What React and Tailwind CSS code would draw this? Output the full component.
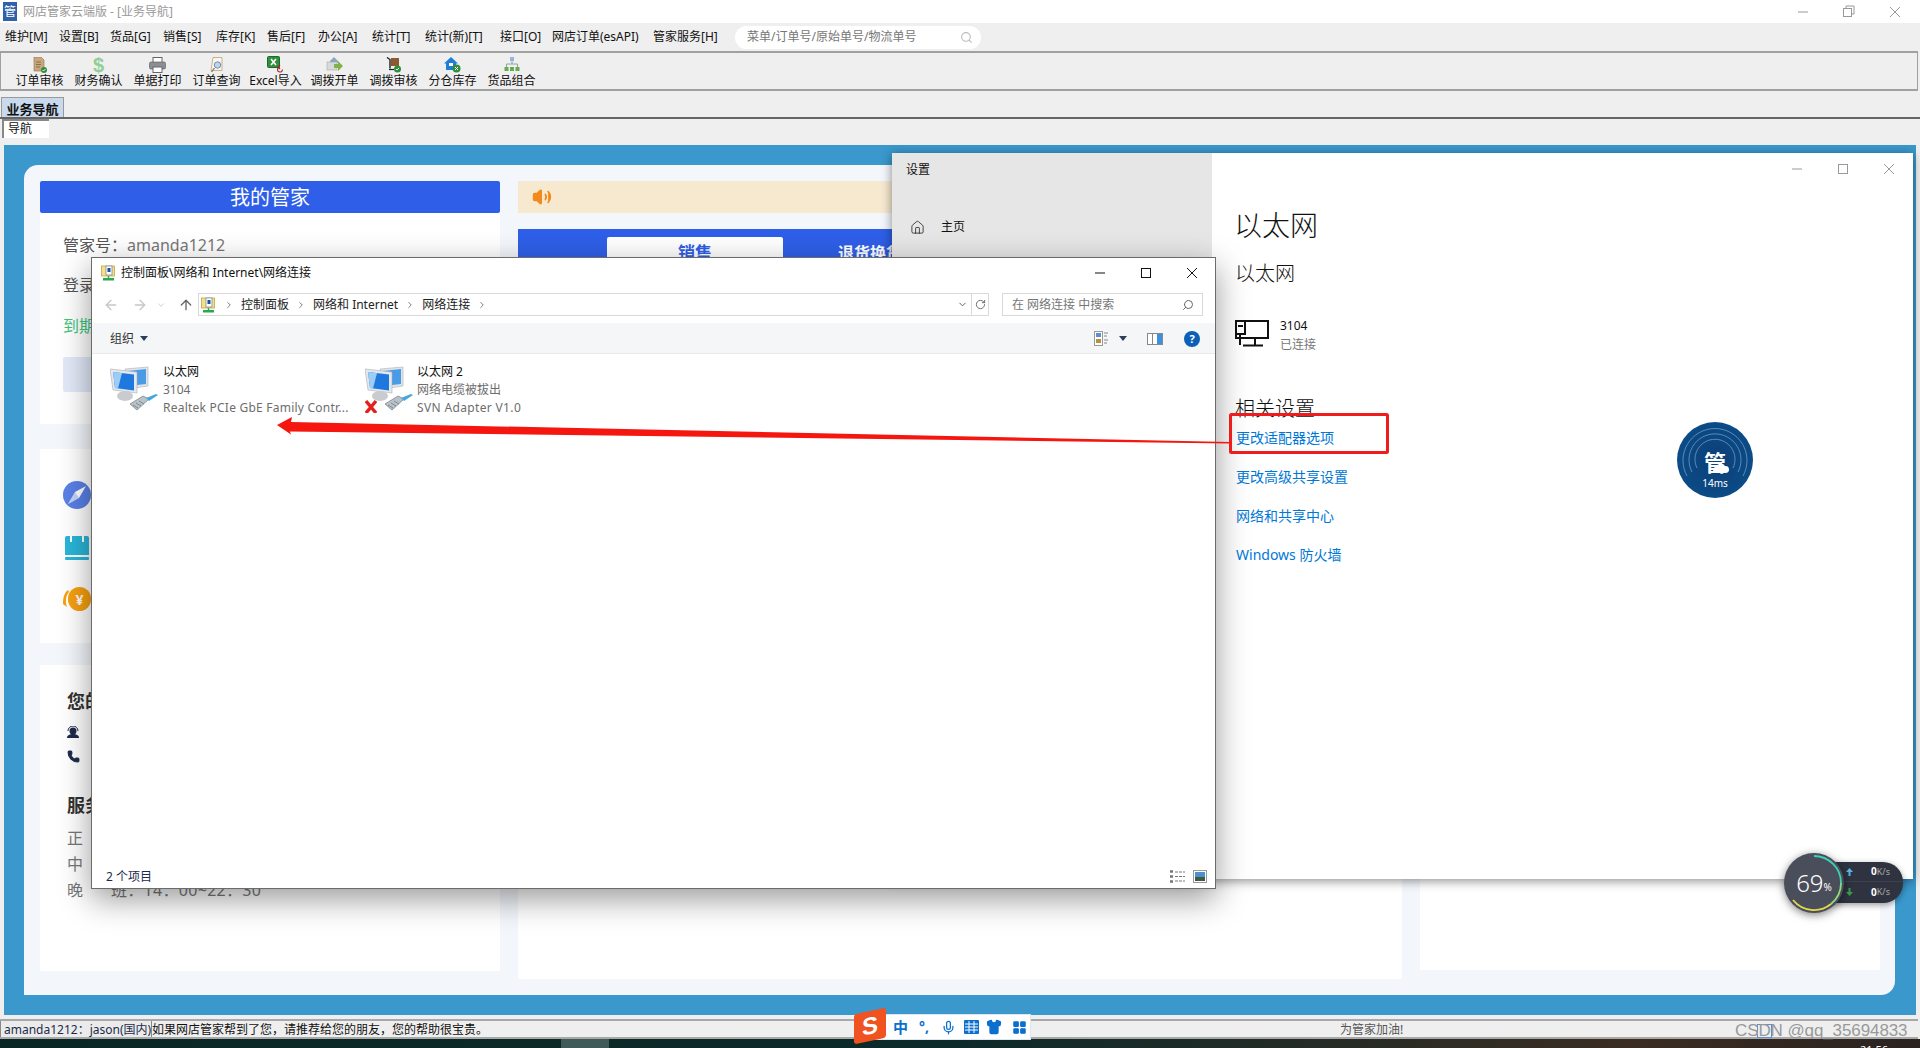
import { ArrowLeft, ArrowRight, ArrowUp, ChevronDown, ChevronRight, RotateCw, Search, Home, Mic, Shirt, LayoutGrid, Phone, Volume2 } from "lucide-react";

const menus = [
  ["维护[M]", "w-[54px]"],
  ["设置[B]", "w-[51px]"],
  ["货品[G]", "w-[53px]"],
  ["销售[S]", "w-[53px]"],
  ["库存[K]", "w-[51px]"],
  ["售后[F]", "w-[51px]"],
  ["办公[A]", "w-[54px]"],
  ["统计[T]", "w-[53px]"],
  ["统计(新)[T]", "w-[75px]"],
  ["接口[O]", "w-[52px]"],
  ["网店订单(esAPI)", "w-[101px]"],
  ["管家服务[H]", "w-[66px]"],
];

const links = ["更改适配器选项", "更改高级共享设置", "网络和共享中心", "Windows 防火墙"];

// little toolbar pictures
const DocIcon = () => (
  <svg width="16" height="16" viewBox="0 0 16 16">
    <path d="M2 0h7l3 3v11H2z" fill="#c9a77c" stroke="#8d7152" strokeWidth="0.6" />
    <path d="M4 5h5M4 7.5h5M4 10h4" stroke="#7a5f42" strokeWidth="0.8" />
    <circle cx="12" cy="13" r="3" fill="#2f8f3a" />
    <path d="M10.5 13l1 1 2-2" stroke="#fff" strokeWidth="0.9" fill="none" />
  </svg>
);
const DollarIcon = () => <span className="h-4 text-[20px] leading-4 font-bold text-[#8fcf95] font-['Liberation_Sans',sans-serif]">$</span>;
const PrintIcon = () => (
  <svg width="17" height="16" viewBox="0 0 17 16">
    <rect x="4" y="0.5" width="9" height="5" fill="#fff" stroke="#666" />
    <rect x="0.5" y="5" width="16" height="7" rx="1.5" fill="#8b8f94" stroke="#555" strokeWidth="0.6" />
    <rect x="4" y="10" width="9" height="5.5" fill="#fff" stroke="#666" />
  </svg>
);
const QueryIcon = () => (
  <svg width="16" height="16" viewBox="0 0 16 16">
    <path d="M4 0.5h9v13H2z" fill="#fbf6ea" stroke="#b7a27f" strokeWidth="0.8" />
    <circle cx="8.5" cy="8" r="3.2" fill="#bcd4ee" stroke="#6d8fb5" />
    <path d="M5.5 11l-3 4" stroke="#8a6d45" strokeWidth="1.2" />
  </svg>
);
const ExcelIcon = () => (
  <svg width="17" height="17" viewBox="0 0 17 17">
    <rect x="0.5" y="0.5" width="12" height="11" rx="1" fill="#2f8f3a" stroke="#1d6b28" />
    <path d="M4 3l5 6M9 3L4 9" stroke="#fff" strokeWidth="1.6" />
    <path d="M15.5 13.5a2.5 2.5 0 1 1-2.5-2.5M13 9l-2 2 2 2" stroke="#a3262a" strokeWidth="1.1" fill="none" />
  </svg>
);
const TransferIcon = () => (
  <svg width="17" height="15" viewBox="0 0 17 15">
    <path d="M4 4l4-4 4 4v2H4z" fill="#8aa7c2" />
    <rect x="1" y="5" width="10" height="8" fill="#d9d9d9" stroke="#aaa" strokeWidth="0.6" />
    <path d="M8 7h4V4l5 5-5 5v-3H8z" fill="#7fb347" />
  </svg>
);
const CartIcon = () => (
  <svg width="16" height="16" viewBox="0 0 16 16">
    <path d="M1 0.5l3 2v9" stroke="#222" strokeWidth="1.4" fill="none" />
    <rect x="5" y="1" width="8" height="8" fill="#8a5a30" />
    <path d="M3 12.5h5" stroke="#222" strokeWidth="1.2" />
    <circle cx="11.5" cy="12" r="3.5" fill="#2f8f3a" />
    <path d="M10 12l1 1 2-2" stroke="#fff" strokeWidth="0.9" fill="none" />
  </svg>
);
const HouseIcon = () => (
  <svg width="17" height="16" viewBox="0 0 17 16">
    <path d="M7 0l7 6.5h-2V13H2V6.5H0z" fill="#1f7fd6" />
    <rect x="5" y="6" width="4" height="3" fill="#fff" />
    <circle cx="12.5" cy="11.5" r="4" fill="#2f8f3a" />
    <path d="M11 10l3 3M14 10l-3 3" stroke="#fff" strokeWidth="1" />
  </svg>
);
const TreeIcon = () => (
  <svg width="16" height="15" viewBox="0 0 16 15">
    <rect x="6" y="0" width="4" height="4" fill="#8fb6e6" />
    <path d="M8 4v3M2.5 10V7h11v3" stroke="#8a8a8a" strokeWidth="0.8" fill="none" />
    <rect x="0.5" y="10" width="4" height="4" fill="#5fae4f" />
    <rect x="6" y="10" width="4" height="4" fill="#5fae4f" />
    <rect x="11.5" y="10" width="4" height="4" fill="#5fae4f" />
  </svg>
);

const tools = [
  ["订单审核", <DocIcon />],
  ["财务确认", <DollarIcon />],
  ["单据打印", <PrintIcon />],
  ["订单查询", <QueryIcon />],
  ["Excel导入", <ExcelIcon />],
  ["调拨开单", <TransferIcon />],
  ["调拨审核", <CartIcon />],
  ["分仓库存", <HouseIcon />],
  ["货品组合", <TreeIcon />],
];

// control panel folder-ish icon
const PanelIcon = () => (
  <svg width="15" height="16" viewBox="0 0 15 16">
    <rect x="0.5" y="1" width="13" height="10" fill="#f3e08a" stroke="#b59c3d" strokeWidth="0.7" />
    <rect x="5" y="1" width="6" height="9" fill="#fff" stroke="#5d6f8c" strokeWidth="0.6" />
    <rect x="6.5" y="3" width="3" height="4" fill="#1f4fa0" />
    <path d="M7.5 11v2" stroke="#2aa84a" strokeWidth="1.4" />
    <rect x="2" y="13" width="11" height="2.5" fill="#2aa84a" />
  </svg>
);

const NetworkIcon = ({ off }) => (
  <svg className="shrink-0" width="48" height="50" viewBox="0 0 48 50">
    {/* back monitor */}
    <path d="M15 6l23-2v19l-20 3z" fill="#dfe4ea" stroke="#aab2bb" strokeWidth="0.6" />
    <path d="M18 8l18-2v15l-18 2z" fill="#4a9be6" />
    {/* front monitor */}
    <path d="M0 6l27 3v21L3 27z" fill="#e4e8ec" stroke="#a7afb8" strokeWidth="0.6" />
    <path d="M3 9l21 2.500v16L5 25z" fill="#1e78de" />
    <path d="M3 9l9 1-4 15.500L5 25z" fill="#9ccdf4" />
    <ellipse cx="15" cy="33" rx="8" ry="5" fill="#c9cccf" />
    {/* plug */}
    <path d="M20 41l13-8 6 3-12 11z" fill="#b8c2c8" stroke="#6f7c84" strokeWidth="0.7" />
    <path d="M23 42l5 3M26 40l5 3M29 38l5 3" stroke="#6f7c84" strokeWidth="0.8" />
    <path d="M36 35l10-4 2 1-9 6z" fill="#46a6dd" />
    {off && <path d="M1 38l10 12M11 38L1 50" stroke="#e3201c" strokeWidth="3.4" />}
  </svg>
);

const WinButtons = ({ tone }) => (
  <div className={`flex items-center h-full ${tone}`}>
    <svg width="46" height="12" viewBox="0 0 46 12"><path d="M18 6h10" stroke="currentColor" /></svg>
    <svg width="46" height="12" viewBox="0 0 46 12"><rect x="18.5" y="1.5" width="9" height="9" fill="none" stroke="currentColor" /></svg>
    <svg width="46" height="12" viewBox="0 0 46 12"><path d="M18 1l10 10M28 1L18 11" stroke="currentColor" /></svg>
  </div>
);

function Explorer() {
  return (
    <div className="absolute left-[91px] top-[257px] w-[1125px] h-[632px] bg-white border border-[#6b6b6b] shadow-[0_10px_30px_rgba(0,0,0,0.4)] flex flex-col text-[12px]">
      <div className="h-[31px] shrink-0 flex items-center pl-[9px] pb-[2px] justify-between">
        <div className="flex items-center gap-[5px] text-[#111]">
          <PanelIcon />
          <span>控制面板\网络和 Internet\网络连接</span>
        </div>
        <div className="h-full flex items-center"><WinButtons tone="text-[#111]" /></div>
      </div>
      <div className="h-[34px] shrink-0 flex items-start pt-[4px]">
        <div className="w-[106px] flex items-center pl-[11px] h-[23px] text-[#c4c8cc]">
          <ArrowLeft size={16} />
          <ArrowRight size={16} className="ml-[13px]" />
          <ChevronDown size={10} className="ml-[8px]" />
          <ArrowUp size={16} className="text-[#666] ml-[12px]" />
        </div>
        <div className="w-[791px] h-[23px] border border-[#d9d9d9] flex items-center pl-[2px] text-[#222]">
          <PanelIcon />
          <ChevronRight size={10} className="text-[#666] ml-[8px]" />
          <span className="ml-[7px]">控制面板</span>
          <ChevronRight size={10} className="text-[#666] ml-[7px]" />
          <span className="ml-[7px]">网络和 Internet</span>
          <ChevronRight size={10} className="text-[#666] ml-[7px]" />
          <span className="ml-[7px]">网络连接</span>
          <ChevronRight size={10} className="text-[#666] ml-[7px]" />
          <div className="flex-1" />
          <ChevronDown size={11} className="text-[#555] mr-[3px]" />
          <div className="w-[17px] h-full border-l border-[#d9d9d9] flex items-center justify-center">
            <RotateCw size={11} className="text-[#666]" />
          </div>
        </div>
        <div className="ml-[13px] w-[201px] h-[23px] border border-[#d9d9d9] flex items-center justify-between pl-[9px] pr-[8px] text-[#777]">
          <span>在 网络连接 中搜索</span>
          <Search size={12} className="text-[#666] -scale-x-100" />
        </div>
      </div>
      <div className="h-[31px] shrink-0 bg-[#f5f6f7] border-b border-[#e8e9ea] flex items-center pt-[1px] pl-[18px] pr-[15px] justify-between">
        <div className="flex items-center gap-[6px] text-[#333]">
          <span>组织</span>
          <svg width="8" height="5" viewBox="0 0 8 5"><path d="M0 0h8L4 5z" fill="#2b3f5c" /></svg>
        </div>
        <div className="flex items-center">
          <svg width="15" height="15" viewBox="0 0 15 15">
            <rect x="0.5" y="0.5" width="8" height="14" fill="#fff" stroke="#999" />
            <rect x="2" y="2" width="5" height="4" fill="#5b8fd0" />
            <rect x="2" y="8" width="5" height="4" fill="#b98f44" />
            <path d="M10 2h4M10 5h3M10 9h4M10 12h3" stroke="#888" />
          </svg>
          <svg className="ml-[10px]" width="8" height="5" viewBox="0 0 8 5"><path d="M0 0h8L4 5z" fill="#2b3f5c" /></svg>
          <svg className="ml-[20px]" width="16" height="12" viewBox="0 0 16 12">
            <rect x="0.5" y="0.5" width="15" height="11" fill="#fff" stroke="#888" />
            <rect x="10" y="1" width="5" height="10" fill="#3d8fe0" />
            <path d="M5.5 1v10" stroke="#888" />
          </svg>
          <div className="ml-[21px] w-[16px] h-[16px] rounded-full bg-[#0b5fb5] text-white text-[11px] font-bold flex items-center justify-center leading-none">?</div>
        </div>
      </div>
      <div className="flex-1 flex pt-[9px] pl-[18px] items-start">
        <div className="w-[255px] flex gap-[5px]">
          <NetworkIcon />
          <div className="leading-[18px]">
            <div className="text-[#111]">以太网</div>
            <div className="text-[#6d6d6d]">3104</div>
            <div className="text-[#6d6d6d] whitespace-nowrap tracking-[0.23px]">Realtek PCIe GbE Family Contr...</div>
          </div>
        </div>
        <div className="flex gap-[4px]">
          <NetworkIcon off />
          <div className="leading-[18px]">
            <div className="text-[#111]">以太网 2</div>
            <div className="text-[#6d6d6d]">网络电缆被拔出</div>
            <div className="text-[#6d6d6d] tracking-[0.35px]">SVN Adapter V1.0</div>
          </div>
        </div>
      </div>
      <div className="h-[24px] shrink-0 flex items-center justify-between pl-[14px] pr-[8px] text-[#1c2b4a]">
        <span className="mt-[1px]">2 个项目</span>
        <div className="flex items-center gap-[8px]">
          <svg width="16" height="13" viewBox="0 0 16 13">
            <path d="M1 1.5h3M1 6.500h3M1 11.5h3" stroke="#777" strokeWidth="2.4" />
            <path d="M6 2h10M6 6.500h10M6 11h10" stroke="#777" strokeDasharray="3 1" />
          </svg>
          <svg width="14" height="13" viewBox="0 0 14 13">
            <rect x="0.5" y="0.500" width="13" height="12" fill="#fff" stroke="#999" />
            <rect x="2" y="2" width="10" height="5" fill="#4b8fd0" />
            <rect x="2" y="7" width="10" height="4" fill="#3d5c3d" />
          </svg>
        </div>
      </div>
    </div>
  );
}

function SettingsWindow() {
  return (
    <div className="absolute left-[892px] top-[153px] w-[1021px] h-[726px] bg-white flex shadow-[0_2px_10px_rgba(0,0,0,0.45)]">
      <div className="w-[320px] shrink-0 bg-[#e6e6e6] text-[12px] text-[#111]">
        <div className="h-[34px] pl-[14px] flex items-center">设置</div>
        <div className="mt-[24px] pl-[18px] flex items-center h-[32px] gap-[16px]">
          <Home size={15} strokeWidth={1.2} />
          <span>主页</span>
        </div>
      </div>
      <div className="flex-1 pl-[23px] text-[#111]">
        <div className="h-[32px] flex justify-end pr-[1px]"><WinButtons tone="text-[#999]" /></div>
        <div className="mt-[22px] -ml-[1px] text-[28px] leading-[36px] font-light">以太网</div>
        <div className="mt-[17px] text-[20px] leading-[28px] font-light">以太网</div>
        <div className="mt-[28px] flex gap-[10px]">
          <svg className="mt-[4px]" width="35" height="27" viewBox="0 0 35 27" fill="none" stroke="#111" strokeWidth="2">
            <rect x="1" y="1" width="32" height="17" fill="#fff" />
            <rect x="1" y="1" width="9" height="13" fill="#fff" />
            <path d="M3 6h5M5 14v11M20 18v7M8 25.500h20" />
          </svg>
          <div className="text-[12px] leading-[19px]">
            <div>3104</div>
            <div className="text-[#777]">已连接</div>
          </div>
        </div>
        <div className="mt-[41px] text-[20px] leading-[28px] font-light">相关设置</div>
        <div className="mt-[6px] ml-[1px] flex flex-col gap-[21px] text-[14px] leading-[18px] text-[#0078d7]">
          {links.map((l) => <div key={l}>{l}</div>)}
        </div>
      </div>
    </div>
  );
}

function Overlays() {
  return (
    <>
      <svg className="absolute left-0 top-0 pointer-events-none" width="1920" height="1048">
        <path d="M277 425l15-8-1 5 939 20 0 1.500-940-12 1 3z" fill="#f5160f" />
        <rect x="1230.500" y="414.500" width="157" height="38" rx="1" fill="none" stroke="#ee1c1c" strokeWidth="3" />
      </svg>
      {/* ping ball */}
      <div className="absolute left-[1677px] top-[422px] w-[76px] h-[76px] rounded-full bg-[radial-gradient(circle,#0d3f78_0%,#0b4a85_65%,#045f9a_100%)] flex flex-col items-center pt-[28px] text-white">
        <svg className="absolute inset-0" width="76" height="76" viewBox="0 0 76 76" fill="none" stroke="#6f9cc4" strokeWidth="0.8">
          <path d="M10 54a32 32 0 1 1 56 0" />
          <path d="M15 50a26 26 0 1 1 46 0" />
          <path d="M20 46a20 20 0 1 1 36 0" />
        </svg>
        <span className="relative text-[22px] leading-[24px] font-bold">管</span>
        <svg className="absolute left-[36px] top-[40px]" width="16" height="11" viewBox="0 0 16 11">
          <path d="M3 11a3 3 0 0 1 0-6 5 5 0 0 1 9-1 3.500 3.500 0 0 1 1 7z" fill="#fff" />
        </svg>
        <span className="relative mt-[3px] text-[10px] leading-[12px]">14ms</span>
      </div>
      {/* net speed */}
      <div className="absolute left-[1830px] top-[862px] w-[73px] h-[41px] rounded-r-[20px] bg-[#2f3340] text-[10px] text-white shadow-[0_2px_6px_rgba(0,0,0,0.4)]">
        <div className="h-[20px] border-b border-[#3e4250] flex items-center pl-[16px]">
          <svg className="mr-[18px]" width="7" height="8" viewBox="0 0 7 8"><path d="M3.500 0L7 4H4.500v4h-2V4H0z" fill="#5bb4e8" /></svg>
          <b>0</b><span className="text-[#aaa] text-[9px]">K/s</span>
        </div>
        <div className="h-[20px] flex items-center pl-[16px]">
          <svg className="mr-[18px]" width="7" height="8" viewBox="0 0 7 8"><path d="M3.500 8L0 4h2.500V0h2v4H7z" fill="#3aa04a" /></svg>
          <b>0</b><span className="text-[#aaa] text-[9px]">K/s</span>
        </div>
      </div>
      <div className="absolute left-[1784px] top-[853px] w-[60px] h-[60px] rounded-full bg-[#4a4e5b] shadow-[0_2px_8px_rgba(0,0,0,0.5)] flex items-center justify-center text-white">
        <svg className="absolute inset-0" width="60" height="60" viewBox="0 0 60 60" fill="none" strokeWidth="1.8">
          <path d="M30 3a27 27 0 0 1 27 27" stroke="#3fd1b5" />
          <path d="M57 30a27 27 0 0 1-10 21" stroke="#8fdc7a" />
          <path d="M47 51a27 27 0 0 1-38-4" stroke="#e3d94a" />
        </svg>
        <span className="text-[24px] leading-none font-light">69</span><span className="text-[10px] mt-[8px]">%</span>
      </div>
      {/* sogou bar */}
      <div className="absolute left-[870px] top-[1014px] w-[161px] h-[26px] bg-white border border-[#dbe6f5] flex items-center pl-[22px] text-[#0b6fd0]">
        <span className="text-[15px] font-bold leading-none">中</span>
        <span className="ml-[11px] text-[14px] font-bold leading-none">°,</span>
        <Mic size={15} className="ml-[12px]" />
        <svg className="ml-[8px]" width="15" height="14" viewBox="0 0 15 14">
          <rect width="15" height="14" rx="1" fill="#0b6fd0" />
          <path d="M1 4h13M1 7h13M1 10h13M5 1v12M10 1v12" stroke="#fff" />
        </svg>
        <Shirt size={16} fill="#0b6fd0" className="ml-[7px]" />
        <LayoutGrid size={15} fill="#0b6fd0" className="ml-[10px]" />
      </div>
      <div className="absolute left-[854px] top-[1011px] w-[32px] h-[30px] bg-[#f0531f] -skew-y-12 rounded-[3px] flex items-center justify-center text-white text-[24px] font-bold font-['Liberation_Sans',sans-serif] leading-none">S</div>
      <div className="absolute left-[1757px] top-[1024px] w-[15px] h-[14px] border border-[#5b8fd0]" />
      <div className="absolute left-[1735px] top-[1021px] text-[17px] leading-[20px] text-[#999] tracking-[-0.1px] font-['Liberation_Sans',sans-serif]">CSDN @qq_35694833</div>
    </>
  );
}

export default function App() {
  return (
    <div className="relative w-[1920px] h-[1048px] overflow-hidden bg-[#efefef] text-[12px] text-[#111] font-['Noto_Sans','Noto_Sans_CJK_SC',sans-serif]">
      {/* title bar */}
      <div className="h-[23px] bg-white flex items-center justify-between">
        <div className="flex items-center gap-[6px] pl-[3px] text-[#999]">
          <div className="w-[14px] h-[19px] bg-[#2f62a8] text-white text-[12px] leading-[19px] text-center">管</div>
          <span>网店管家云端版 - [业务导航]</span>
        </div>
        <div className="flex items-center text-[#999]">
          <svg width="46" height="14" viewBox="0 0 46 14"><path d="M18 7h10" stroke="currentColor" /></svg>
          <svg width="46" height="14" viewBox="0 0 46 14" fill="none" stroke="currentColor"><rect x="17.500" y="3.500" width="8" height="8" /><path d="M20 3V1h8v8h-2" /></svg>
          <svg className="mr-[2px]" width="46" height="14" viewBox="0 0 46 14"><path d="M18 2l10 10M28 2L18 12" stroke="currentColor" /></svg>
        </div>
      </div>
      {/* menu */}
      <div className="h-[28px] flex items-center pl-[5px]">
        <div className="flex">
          {menus.map(([m, w]) => <span key={m} className={`whitespace-nowrap ${w}`}>{m}</span>)}
        </div>
        <div className="ml-[16px] w-[246px] h-[23px] rounded-full bg-white flex items-center justify-between pl-[12px] pr-[8px] text-[#777]">
          <span>菜单/订单号/原始单号/物流单号</span>
          <Search size={13} className="text-[#bbb]" />
        </div>
      </div>
      {/* toolbar */}
      <div className="h-[40px] mr-[2px] border-2 border-[#a0a0a0] border-x-[1px] flex pl-[9px]">
        {tools.map(([label, icon]) => (
          <div key={label} className="w-[59px] flex flex-col items-center pt-[3px]">
            <div className="h-[17px] flex items-center">{icon}</div>
            <span className="whitespace-nowrap leading-[15px]">{label}</span>
          </div>
        ))}
      </div>
      {/* tabs */}
      <div className="mt-[6px] h-[20px] pl-[1px] flex">
        <div className="w-[63px] bg-[#c9d9ee] border border-[#999] border-b-0 text-[13px] font-bold leading-[22px] text-center whitespace-nowrap">业务导航</div>
      </div>
      <div className="h-[2px] bg-[#666]" />
      <div className="h-[19px] pl-[2px]">
        <div className="w-[47px] h-[19px] bg-white border-l-2 border-t-2 border-[#888] pl-[4px] leading-[16px]">导航</div>
      </div>
      <div className="h-[7px]" />
      {/* blue desk */}
      <div className="ml-[4px] w-[1912px] h-[870px] bg-[#3a98cc] pl-[20px] pt-[20px]">
        <div className="w-[1871px] h-[830px] bg-[#f3f6fb] rounded-tl-[14px] rounded-br-[14px] pl-[16px] pt-[16px] flex gap-[18px]">
          <div className="w-[460px] flex flex-col">
            <div className="h-[32px] bg-[#2f5fe8] rounded-[2px] text-white text-[20px] leading-[34px] text-center">我的管家</div>
            <div className="h-[211px] bg-white pl-[23px] pt-[20px] text-[16px] leading-[24px] text-[#555]">
              <div>{"管家号\uFF1A"}<span className="text-[#777]">amanda1212</span></div>
              <div className="mt-[16px]">登录</div>
              <div className="mt-[17px] text-[#3cc47c]">到期</div>
              <div className="mt-[19px] w-[120px] h-[35px] bg-[#e2e9f8] rounded-[2px]" />
            </div>
            <div className="mt-[25px] h-[194px] bg-white pl-[23px] pt-[32px]">
              <svg width="28" height="28" viewBox="0 0 28 28">
                <circle cx="14" cy="14" r="14" fill="#5a80e8" />
                <path d="M23 5l-7 12-11 6 7-12z" fill="#fff" />
                <path d="M12 11l4 6-11 6z" fill="#5a80e8" opacity="0.35" />
              </svg>
              <svg className="mt-[27px] ml-[2px]" width="24" height="24" viewBox="0 0 24 24">
                <path d="M2 0h20a2 2 0 0 1 2 2v17H0V2a2 2 0 0 1 2-2z" fill="#29b5d8" />
                <rect x="5" y="0" width="2" height="6" fill="#fff" />
                <rect x="17" y="0" width="2" height="6" fill="#fff" />
                <rect x="0" y="21" width="24" height="3" rx="1" fill="#29b5d8" />
              </svg>
              <div className="mt-[27px] relative ml-[5px] w-[23px] h-[24px] rounded-full bg-[#f7a00f] flex items-center justify-center text-white text-[14px] font-bold">
                <svg className="absolute left-[-5px] top-[3px]" width="6" height="18" viewBox="0 0 6 18"><path d="M5 0C1 3 0 8 0 14l4 3C2 11 3 5 6 2z" fill="#f7a00f" /></svg>
                ¥
              </div>
            </div>
            <div className="mt-[22px] h-[306px] bg-white pl-[27px] pt-[24px]">
              <div className="text-[18px] leading-[24px] font-bold text-[#333]">您的</div>
              <div className="mt-[6px] h-[25px] flex items-center">
                <svg width="12" height="12" viewBox="0 0 12 12">
                  <circle cx="6" cy="5" r="3.500" fill="#1c2b4a" />
                  <path d="M1 5a5 5 0 0 1 10 0" fill="none" stroke="#1c2b4a" />
                  <path d="M0 12c0-3 3-4 6-4s6 1 6 4z" fill="#1c2b4a" />
                </svg>
              </div>
              <div className="h-[25px] flex items-center"><Phone size={13} fill="#1c2b4a" className="text-[#1c2b4a]" /></div>
              <div className="mt-[24px] text-[18px] leading-[24px] font-bold text-[#333]">服务</div>
              <div className="mt-[8px] text-[16px] leading-[26px] text-[#777] flex flex-col">
                <div>正</div>
                <div>中</div>
                <div className="flex"><span className="w-[44px]">晚</span><span className="tracking-[0.3px]">{"班\uFF1A14\uFF1A00~22\uFF1A30"}</span></div>
              </div>
            </div>
          </div>
          <div className="w-[1362px] flex flex-col">
            <div className="h-[32px] bg-[#f6e9d0] flex items-center pl-[14px]">
              <Volume2 size={20} fill="#f28a1c" className="text-[#f28a1c]" />
            </div>
            <div className="mt-[16px] h-[44px] bg-[#2f5fe8] pl-[89px] pt-[8px] flex">
              <div className="w-[176px] h-[36px] bg-white rounded-t-[2px] text-center text-[17px] font-bold leading-[32px] text-[#2f5fe8]">销售</div>
              <div className="ml-[55px] text-[16px] font-bold leading-[32px] text-white">退货换货</div>
            </div>
            <div className="mt-[18px] flex gap-[18px] items-start">
              <div className="w-[884px] h-[688px] bg-white" />
              <div className="w-[460px] h-[679px] bg-white" />
            </div>
          </div>
        </div>
      </div>
      <div className="h-[4px]" />
      {/* status bar */}
      <div className="h-[20px] border-y-2 border-[#a8a8a8] flex items-center mr-[2px] relative">
        <div className="w-[152px] h-full border-x border-[#888] bg-[#ebebeb] whitespace-nowrap overflow-hidden leading-[17px] pl-[3px] text-[#1c2b4a]">{"amanda1212\uFF1Ajason(国内)"}</div>
        <span className="leading-[17px]">{"如果网店管家帮到了您\uFF0C请推荐给您的朋友\uFF0C您的帮助很宝贵。"}</span>
        <span className="absolute left-[1340px] top-0 leading-[17px] text-[#555]">为管家加油!</span>
      </div>
      {/* desktop strip */}
      <div className="h-[9px] bg-[linear-gradient(90deg,#0a2624_0%,#0d2a2a_50%,#3a2c22_85%,#2a2320_100%)] flex">
        <div className="ml-[561px] w-[48px] h-full bg-[#3f5a58]" />
        <span className="ml-[1251px] text-[11px] leading-[22px] text-white">21:56</span>
      </div>

      <SettingsWindow />
      <Explorer />
      <Overlays />
    </div>
  );
}
